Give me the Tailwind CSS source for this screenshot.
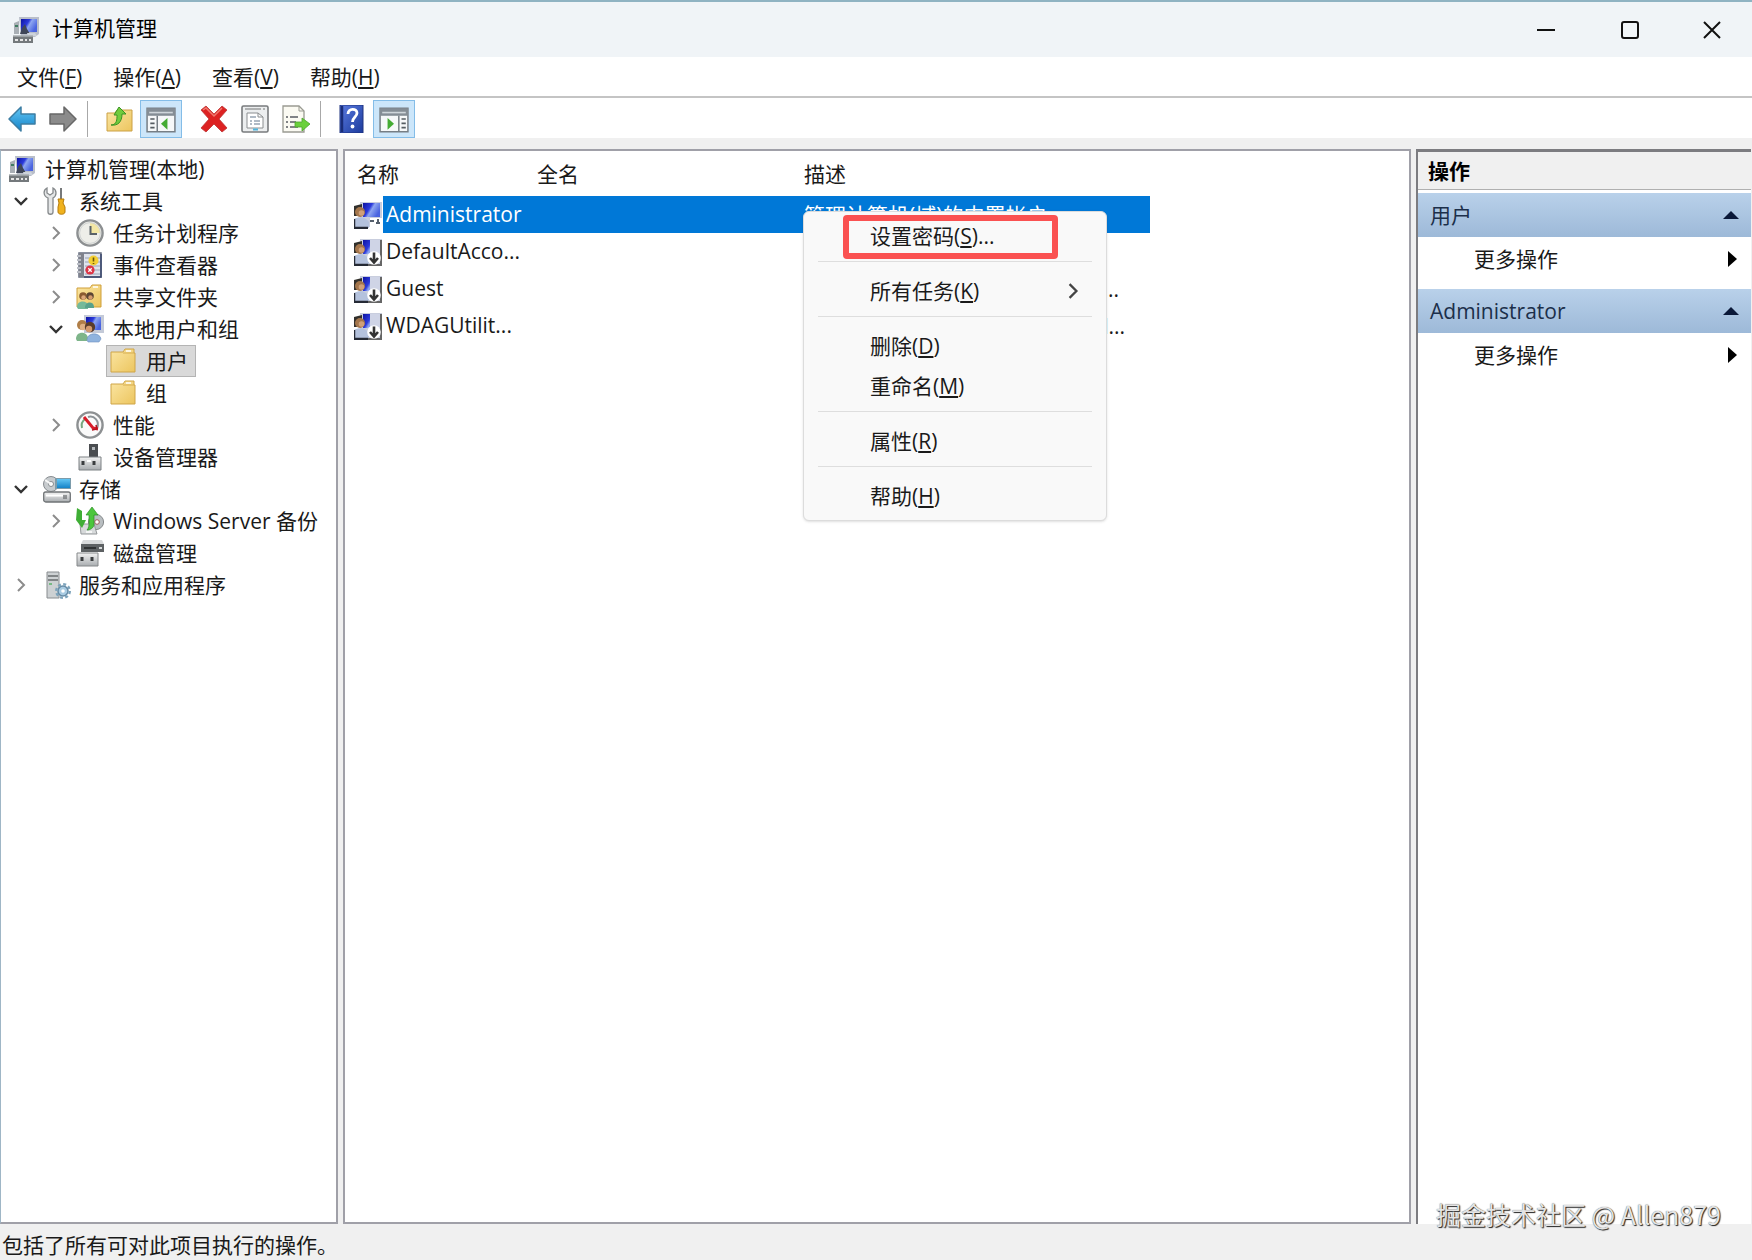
<!DOCTYPE html>
<html lang="zh-CN">
<head>
  <meta charset="UTF-8">
  <meta name="viewport" content="width=device-width, initial-scale=1.0">
  <title>计算机管理</title>
  <script src="https://cdn.jsdelivr.net/npm/@tailwindcss/browser@4"></script>
</head>
<body class="h-screen flex flex-col overflow-hidden bg-[#f0f0f0] text-[21px] leading-8 text-[#1a1a1a] font-['Open_Sans','Noto_Sans_CJK_SC',sans-serif]">

  <!-- Icon sprite -->
  <svg class="absolute size-0" aria-hidden="true">
    <defs>
      <linearGradient id="g-screen" x1="0" y1="0" x2="1" y2="0.5">
        <stop offset="0" stop-color="#0d12a0"/><stop offset="0.45" stop-color="#2c3bdc"/><stop offset="0.6" stop-color="#8ea6f0"/><stop offset="1" stop-color="#4a64e0"/>
      </linearGradient>
      <linearGradient id="g-folder" x1="0" y1="0" x2="1" y2="1">
        <stop offset="0" stop-color="#fbe6a4"/><stop offset="1" stop-color="#ecc55e"/>
      </linearGradient>
      <linearGradient id="g-blue" x1="0" y1="0" x2="0" y2="1">
        <stop offset="0" stop-color="#62c6f4"/><stop offset="1" stop-color="#1583c8"/>
      </linearGradient>
      <linearGradient id="g-metal" x1="0" y1="0" x2="0" y2="1">
        <stop offset="0" stop-color="#f2f2f2"/><stop offset="1" stop-color="#a9adb0"/>
      </linearGradient>
      <linearGradient id="g-help" x1="0" y1="0" x2="1" y2="1">
        <stop offset="0" stop-color="#5b7be0"/><stop offset="1" stop-color="#1b3a9c"/>
      </linearGradient>
    </defs>
    <symbol id="computer" viewBox="0 0 28 28">
      <path d="M7 1h20v17l-4 3H9z" fill="#b9bec9"/>
      <path d="M9 3h16v13H9z" fill="url(#g-screen)"/>
      <path d="M2 7l5-2v13H2z" fill="#a9afb5"/>
      <path d="M3 10h3" stroke="#3f7b60" stroke-width="2"/>
      <path d="M10 12l3-4 2 5 3 5H8z" fill="#3f4658"/>
      <path d="M15 17h8l2 3h-9z" fill="#cdd3db"/>
      <path d="M1 20h20v7H1z" fill="#74797c"/>
      <path d="M1 20h20" stroke="#a9aeb0" stroke-width="1.5"/>
      <path d="M3 24h3m2 0h3m2 0h2m2 0h2" stroke="#e6e6e6" stroke-width="2"/>
    </symbol>
    <symbol id="tools" viewBox="0 0 28 28">
      <path d="M4 1v5l3 2 3-2V1c4 2 4 8 0 10v14c0 3-5 3-5 0V11C0 9 0 3 4 1z" fill="#e4e6e7" stroke="#85898b" stroke-width="1.3"/>
      <path d="M18 1v11" stroke="#77797a" stroke-width="2"/>
      <path d="M15 12h6l-1 4 2 4v5c0 3-7 3-7 0v-5l1-4z" fill="#f0b21e" stroke="#b57b09"/>
    </symbol>
    <symbol id="clock" viewBox="0 0 28 28">
      <circle cx="14" cy="14" r="12.6" fill="#eeeee9" stroke="#8d9092" stroke-width="2.4"/>
      <path d="M14 14V3.500a10.500 10.500 0 0 1 10.500 10.500z" fill="#f3e7a5"/>
      <circle cx="14" cy="14" r="10.400" fill="none" stroke="#cfd2d2"/>
      <path d="M14.500 7v8H21" fill="none" stroke="#5a6268" stroke-width="2"/>
    </symbol>
    <symbol id="event" viewBox="0 0 28 28">
      <path d="M3 2h22v24H3z" fill="#dfe3ec" stroke="#666d80" stroke-width="1.500"/>
      <path d="M3 2h5v24H3z" fill="#7f828c"/>
      <path d="M1 5h4M1 9h4M1 13h4M1 17h4M1 21h4" stroke="#b9bcc4" stroke-width="2"/>
      <path d="M9 7h15M9 11h15M9 15h15M9 19h15M9 23h15" stroke="#9aa2b6"/>
      <circle cx="17.500" cy="9.500" r="5" fill="#f3cf34"/>
      <path d="M17.500 6.500v4m0 1.500v1" stroke="#6b5608" stroke-width="1.600"/>
      <circle cx="14" cy="19" r="4.600" fill="#dc3546"/>
      <path d="M12.300 17.300l3.400 3.400m0-3.400l-3.400 3.400" stroke="#fff" stroke-width="1.300"/>
      <path d="M25 3v23H8" fill="none" stroke="#3d4a70" stroke-width="1.500"/>
    </symbol>
    <symbol id="shared" viewBox="0 0 28 28">
      <path d="M1 5h13l2-3h9v22H1z" fill="url(#g-folder)" stroke="#cf9f3a"/>
      <path d="M17 4h5" stroke="#fff" stroke-width="1.500"/>
      <circle cx="7" cy="13" r="3.800" fill="#8a5a30"/>
      <circle cx="14" cy="13" r="3.800" fill="#5b4433"/>
      <circle cx="7.500" cy="14.500" r="2.200" fill="#dca77a"/>
      <circle cx="14.500" cy="14.500" r="2.200" fill="#d59c6c"/>
      <path d="M1 24c0-7 10-7 11-2v4H2z" fill="#74b99a"/>
      <path d="M9 25c0-7 9-7 9-1v1z" fill="#58a18c"/>
    </symbol>
    <symbol id="localusers" viewBox="0 0 28 28">
      <path d="M8 0h20v18H8z" fill="#c4cad8"/>
      <path d="M10 2h15v13H10z" fill="url(#g-screen)"/>
      <circle cx="6" cy="10" r="5" fill="#b07e48"/>
      <circle cx="7" cy="12" r="3.200" fill="#dfb083"/>
      <circle cx="14" cy="12" r="5.200" fill="#5a3c2b"/>
      <circle cx="13" cy="14" r="3.200" fill="#d39a6f"/>
      <path d="M0 24c0-8 11-8 12-1l-1 3H1z" fill="#7eb58a"/>
      <path d="M11 25c0-8 13-8 14-1l-2 3H12z" fill="#8fb3de" stroke="#6f90c0" stroke-width=".6"/>
    </symbol>
    <symbol id="folder" viewBox="0 0 28 28">
      <path d="M2 5h12l2-3h9v4h1v19H2z" fill="url(#g-folder)" stroke="#cfa548"/>
      <path d="M14 6h11" stroke="#d7ae52"/>
      <path d="M17 4h5" stroke="#fff" stroke-width="1.500"/>
    </symbol>
    <symbol id="perf" viewBox="0 0 28 28">
      <circle cx="14" cy="14" r="12.600" fill="#fafafa" stroke="#8d9092" stroke-width="2.400"/>
      <path d="M6 17a8.500 8.500 0 0 1 3-9" fill="none" stroke="#76a77e" stroke-width="2"/>
      <path d="M12 6c6-2 12 4 9 11" fill="none" stroke="#8c9296" stroke-width="2"/>
      <path d="M8 6l9 11 5 1" fill="none" stroke="#d81d2a" stroke-width="3"/>
      <path d="M20 14l1 4-5 1" fill="none" stroke="#b5121d" stroke-width="1.500"/>
    </symbol>
    <symbol id="device" viewBox="0 0 28 28">
      <path d="M13 1h9v13h-9z" fill="#4a4d50"/>
      <path d="M16 4h3v3h-3z" fill="#b3b8bb"/>
      <path d="M3 14h22v13H3z" fill="url(#g-metal)" stroke="#7d8184"/>
      <path d="M7 18v4m11-4v4" stroke="#3a3d3f" stroke-width="3"/>
      <path d="M11 18h4" stroke="#fff" stroke-width="2"/>
    </symbol>
    <symbol id="storage" viewBox="0 0 28 28">
      <circle cx="8" cy="9" r="7.500" fill="#c7cbce" stroke="#878c90"/>
      <circle cx="8" cy="9" r="2.500" fill="#fff" stroke="#878c90"/>
      <path d="M2 5l6 4" stroke="#f7f7f7" stroke-width="2"/>
      <path d="M12 3h16v11H12z" fill="#7c9cab"/>
      <path d="M14 4h13v9H14z" fill="url(#g-blue)"/>
      <rect x=".7" y="17" width="26.600" height="10" rx="2" fill="url(#g-metal)" stroke="#707477" stroke-width="1.300"/>
      <path d="M3 20.500h17" stroke="#fff" stroke-width="2"/>
      <path d="M21 20v4m2-4v4" stroke="#4e5254"/>
    </symbol>
    <symbol id="backup" viewBox="0 0 28 28">
      <circle cx="20" cy="15" r="7.600" fill="#b9bec1" stroke="#85898b"/>
      <circle cx="21" cy="15" r="2.300" fill="#fff" stroke="#a15c5c"/>
      <path d="M4 17h14l3 10H5z" fill="#d7dadb" stroke="#94989a"/>
      <path d="M1 1l5 3v9h4l-4 8-6-8z" fill="#3fae35"/>
      <path d="M16 0l6 8h-4v9c0 4-4 6-7 6 2-2 2-5 2-8V8h-3z" fill="#4cc63c" stroke="#2c8c26" stroke-width=".7"/>
      <path d="M10 25h6" stroke="#fff" stroke-width="1.500"/>
    </symbol>
    <symbol id="disk" viewBox="0 0 28 28">
      <path d="M7 1h19l2 4H5z" fill="#d8dadb"/>
      <path d="M5 5h23v8H5z" fill="#5d6163"/>
      <path d="M8 9h12" stroke="#2e3132" stroke-width="2"/>
      <path d="M23 9h3" stroke="#d6d9da" stroke-width="2"/>
      <path d="M1 14h21v13H1z" fill="url(#g-metal)" stroke="#85888a"/>
      <path d="M6 18v4m10-4v4" stroke="#3a3d3f" stroke-width="3"/>
    </symbol>
    <symbol id="services" viewBox="0 0 28 28">
      <path d="M4 1h12v26H4z" fill="#cdd1d3" stroke="#888c8f"/>
      <path d="M5 5h10M5 9h10" stroke="#686c6f" stroke-width="1.500"/>
      <path d="M6 13h3" stroke="#59b26a" stroke-width="1.500"/>
      <circle cx="20" cy="20" r="5" fill="#a8cbe2" stroke="#668ba5" stroke-width="1.500"/>
      <circle cx="20" cy="20" r="6.800" fill="none" stroke="#7da3bb" stroke-width="2.400" stroke-dasharray="3 2.340"/>
      <circle cx="20" cy="20" r="1.800" fill="#fff"/>
    </symbol>
    <symbol id="user" viewBox="0 0 28 28">
      <path d="M6 1h22v25H6z" fill="#c9cede"/>
      <path d="M9 2h17v14H9z" fill="url(#g-screen)"/>
      <path d="M0 5l8-2v12H0z" fill="#32302c"/>
      <circle cx="6" cy="11" r="5" fill="#a4764c"/>
      <circle cx="7.500" cy="12" r="2.800" fill="#d0a078"/>
      <path d="M0 27V18c5-3 12-2 15 3v6z" fill="#b4c2dd"/>
      <path d="M0 18v9h14" fill="none" stroke="#252a35" stroke-width="2.500"/>
    </symbol>
    <symbol id="user-admin" viewBox="0 0 28 28">
      <use href="#user"/>
      <path d="M16 17h12v11H16z" fill="#fff"/>
      <path d="M16 20h4m2 2h4m-2-4v4" stroke="#555f6c" stroke-width="2"/>
    </symbol>
    <symbol id="user-off" viewBox="0 0 28 28">
      <use href="#user"/>
      <path d="M16 2h11v14H16z" fill="#cfd4e6"/>
      <path d="M27 2v25H14" fill="none" stroke="#666" stroke-width="2"/>
      <circle cx="20" cy="20" r="6.800" fill="#fff"/>
      <path d="M20 14.500v9m-4-3.500l4 4.500 4-4.500" fill="none" stroke="#333" stroke-width="2.600"/>
    </symbol>
    <symbol id="arrow" viewBox="0 0 28 28">
      <path d="M1 14L13 2v7h14v10H13v7z" stroke-width="1.500" stroke-linejoin="round"/>
    </symbol>
    <symbol id="up-folder" viewBox="0 0 28 28">
      <path d="M1 8h8l2-3h15v21H1z" fill="url(#g-folder)" stroke="#cba045"/>
      <path d="M5 20c6 0 6-6 6-10H8l5-8 7 7h-4c0 8-4 12-11 11z" fill="#71cb3c" stroke="#3b9424"/>
    </symbol>
    <symbol id="pane-left" viewBox="0 0 28 28">
      <path d="M1 4h26v22H1z" fill="#f6f8f9" stroke="#767e85" stroke-width="1.400"/>
      <path d="M1 4h26v7H1z" fill="#848d95"/>
      <path d="M3 8h22" stroke="#cfd6db" stroke-width="1.500"/>
      <path d="M10.500 11v15" stroke="#767e85" stroke-width="1.400"/>
      <path d="M4 14h4M4 18h4M4 22h4" stroke="#555c62" stroke-width="1.600"/>
      <path d="M20 13v11l-6-5.500z" fill="#44ab33"/>
    </symbol>
    <symbol id="pane-right" viewBox="0 0 28 28">
      <path d="M1 4h26v22H1z" fill="#f6f8f9" stroke="#767e85" stroke-width="1.400"/>
      <path d="M1 4h26v7H1z" fill="#848d95"/>
      <path d="M3 8h22" stroke="#cfd6db" stroke-width="1.500"/>
      <path d="M18.500 11v15" stroke="#767e85" stroke-width="1.400"/>
      <path d="M21 14h4M21 18h4M21 22h4" stroke="#555c62" stroke-width="1.600"/>
      <path d="M8 13v11l6-5.500z" fill="#44ab33"/>
    </symbol>
    <symbol id="delete" viewBox="0 0 28 28">
      <path d="M1 5l5-4 8 8 8-8 5 4-8 9 8 9-5 4-8-8-8 8-5-4 8-9z" fill="#dd2222" stroke="#b33" stroke-width=".8"/>
      <path d="M3 5l3-2 8 8 8-8" fill="none" stroke="#f07a70" stroke-width="1.500"/>
    </symbol>
    <symbol id="props" viewBox="0 0 28 28">
      <rect x="1" y="1" width="26" height="26" rx="1.500" fill="#eceeef" stroke="#787b7d" stroke-width="1.600"/>
      <path d="M4 4h16m2 0h2" stroke="#9a9d9f" stroke-width="1.500"/>
      <path d="M6 8h11l5 4v11H6z" fill="#fff" stroke="#8b8e90"/>
      <path d="M17 8v4h5" fill="none" stroke="#8b8e90"/>
      <path d="M9 12h6M9 16h2m2 0h6M9 19h2m2 0h6" stroke="#96a4b3" stroke-width="1.400"/>
      <path d="M12 24.500h5" stroke="#4fb5dd" stroke-width="2"/>
    </symbol>
    <symbol id="export" viewBox="0 0 28 28">
      <path d="M1 1h16l5 5v21H1z" fill="#fbfaf2" stroke="#9a9b92" stroke-width="1.300"/>
      <path d="M17 1v5h5" fill="none" stroke="#9a9b92"/>
      <path d="M4 12h2m2 0h8M4 17h2m2 0h6M4 22h2m2 0h8" stroke="#595c63" stroke-width="1.600"/>
      <path d="M13 17h7v-4l8 6-8 7v-4h-7z" fill="#6bd03c" stroke="#4ba52b" stroke-width=".8"/>
    </symbol>
    <symbol id="help" viewBox="0 0 28 28">
      <path d="M3 0h23v28H3z" fill="url(#g-help)" stroke="#1e327f"/>
      <path d="M5 1v26" stroke="#1a2d78" stroke-width="2.500"/>
      <path d="M11 9c0-6 9-6 9-1 0 4-4.500 4-4.500 9" fill="none" stroke="#fff" stroke-width="2.800"/>
      <circle cx="15.500" cy="21.500" r="1.900" fill="#fff"/>
    </symbol>
    <symbol id="chev-right" viewBox="0 0 14 14">
      <path d="M4 1l6 6-6 6" fill="none" stroke="currentColor" stroke-width="2"/>
    </symbol>
    <symbol id="chev-down" viewBox="0 0 14 14">
      <path d="M1 4l6 6 6-6" fill="none" stroke="currentColor" stroke-width="2.400"/>
    </symbol>
  </svg>

  <!-- Title bar -->
  <header class="h-[57px] shrink-0 flex items-center bg-[#f0f4f7] border-t-2 border-[#8fb3c2] pl-3">
    <svg class="size-7"><use href="#computer"/></svg>
    <h1 class="ml-3 pb-1 grow text-black">计算机管理</h1>
    <button type="button" aria-label="最小化" class="w-[84px] h-full flex items-center justify-center">
      <svg class="size-[18px]" viewBox="0 0 18 18" fill="none" stroke="#111" stroke-width="2"><path d="M0 9h18"/></svg>
    </button>
    <button type="button" aria-label="最大化" class="w-[84px] h-full flex items-center justify-center">
      <svg class="size-[18px]" viewBox="0 0 18 18" fill="none" stroke="#111" stroke-width="2"><rect x="1" y="1" width="16" height="16" rx="2"/></svg>
    </button>
    <button type="button" aria-label="关闭" class="w-20 h-full flex items-center justify-center">
      <svg class="size-[18px]" viewBox="0 0 18 18" fill="none" stroke="#111" stroke-width="2"><path d="M1 1l16 16M17 1L1 17"/></svg>
    </button>
  </header>

  <!-- Menu bar -->
  <nav class="h-[41px] shrink-0 flex items-center gap-[31px] bg-white border-b-2 border-[#c4c4c4] pl-[17px]">
    <button type="button">文件(<u class="underline-offset-2">F</u>)</button>
    <button type="button">操作(<u class="underline-offset-2">A</u>)</button>
    <button type="button">查看(<u class="underline-offset-2">V</u>)</button>
    <button type="button">帮助(<u class="underline-offset-2">H</u>)</button>
  </nav>

  <!-- Toolbar -->
  <div class="h-10 shrink-0 flex items-center bg-white pl-2 pt-0.5" role="toolbar" aria-label="工具栏">
    <button type="button" aria-label="后退"><svg class="size-7" fill="url(#g-blue)" stroke="#3c7da3"><use href="#arrow"/></svg></button>
    <button type="button" aria-label="前进" class="ml-[13px]"><svg class="size-7 -scale-x-100" fill="#8b8b8b" stroke="#686868"><use href="#arrow"/></svg></button>
    <span class="w-px h-9 ml-[10px] bg-[#a8a8a8]"></span>
    <button type="button" aria-label="向上一级" class="ml-[18px]"><svg class="size-7"><use href="#up-folder"/></svg></button>
    <button type="button" aria-label="显示/隐藏控制台树" aria-pressed="true" class="ml-[6px] w-[42px] h-[38px] flex items-center justify-center bg-[#cce6fa] border border-[#84bde8]"><svg class="size-[30px]"><use href="#pane-left"/></svg></button>
    <button type="button" aria-label="删除" class="ml-[18px]"><svg class="size-7"><use href="#delete"/></svg></button>
    <button type="button" aria-label="属性" class="ml-[13px]"><svg class="size-7"><use href="#props"/></svg></button>
    <button type="button" aria-label="导出列表" class="ml-[13px]"><svg class="size-7"><use href="#export"/></svg></button>
    <span class="w-px h-9 ml-[10px] bg-[#a8a8a8]"></span>
    <button type="button" aria-label="帮助" class="ml-[16px]"><svg class="size-7"><use href="#help"/></svg></button>
    <button type="button" aria-label="显示/隐藏操作窗格" aria-pressed="true" class="ml-[8px] w-[42px] h-[38px] flex items-center justify-center bg-[#cce6fa] border border-[#84bde8]"><svg class="size-[30px]"><use href="#pane-right"/></svg></button>
  </div>

  <main class="grow min-h-0 flex gap-[5px] pt-[11px]">

    <!-- Console tree -->
    <aside class="w-[338px] shrink-0 bg-white border-2 border-l border-[#a0a0a8] border-l-[#9fb6c6] pt-[2px]">
      <ul>
        <li class="h-8 flex items-center pl-[7px]"><svg class="size-7 mr-[9px]"><use href="#computer"/></svg>计算机管理(本地)</li>
        <li class="h-8 flex items-center pl-[13px]"><svg class="size-3.5 mr-[15px] text-[#333]"><use href="#chev-down"/></svg><svg class="size-7 mr-2"><use href="#tools"/></svg>系统工具</li>
        <li class="h-8 flex items-center pl-[48px]"><svg class="size-3.5 mr-[13px] text-[#8c8c8c]"><use href="#chev-right"/></svg><svg class="size-7 mr-[9px]"><use href="#clock"/></svg>任务计划程序</li>
        <li class="h-8 flex items-center pl-[48px]"><svg class="size-3.5 mr-[13px] text-[#8c8c8c]"><use href="#chev-right"/></svg><svg class="size-7 mr-[9px]"><use href="#event"/></svg>事件查看器</li>
        <li class="h-8 flex items-center pl-[48px]"><svg class="size-3.5 mr-[13px] text-[#8c8c8c]"><use href="#chev-right"/></svg><svg class="size-7 mr-[9px]"><use href="#shared"/></svg>共享文件夹</li>
        <li class="h-8 flex items-center pl-[48px]"><svg class="size-3.5 mr-[13px] text-[#333]"><use href="#chev-down"/></svg><svg class="size-7 mr-[9px]"><use href="#localusers"/></svg>本地用户和组</li>
        <li class="h-8 flex items-center pl-[105px]"><span class="h-8 flex items-center bg-[#d9d9d9] border border-[#b4b4b4] pl-[2px] pr-[7px]"><svg class="size-7 mr-[9px]"><use href="#folder"/></svg>用户</span></li>
        <li class="h-8 flex items-center pl-[108px]"><svg class="size-7 mr-[9px]"><use href="#folder"/></svg>组</li>
        <li class="h-8 flex items-center pl-[48px]"><svg class="size-3.5 mr-[13px] text-[#8c8c8c]"><use href="#chev-right"/></svg><svg class="size-7 mr-[9px]"><use href="#perf"/></svg>性能</li>
        <li class="h-8 flex items-center pl-[75px]"><svg class="size-7 mr-[9px]"><use href="#device"/></svg>设备管理器</li>
        <li class="h-8 flex items-center pl-[13px]"><svg class="size-3.5 mr-[15px] text-[#333]"><use href="#chev-down"/></svg><svg class="size-7 mr-2"><use href="#storage"/></svg>存储</li>
        <li class="h-8 flex items-center pl-[48px]"><svg class="size-3.5 mr-[13px] text-[#8c8c8c]"><use href="#chev-right"/></svg><svg class="size-7 mr-[9px]"><use href="#backup"/></svg>Windows Server 备份</li>
        <li class="h-8 flex items-center pl-[75px]"><svg class="size-7 mr-[9px]"><use href="#disk"/></svg>磁盘管理</li>
        <li class="h-8 flex items-center pl-[13px]"><svg class="size-3.5 mr-[15px] text-[#8c8c8c]"><use href="#chev-right"/></svg><svg class="size-7 mr-2"><use href="#services"/></svg>服务和应用程序</li>
      </ul>
    </aside>

    <!-- User list -->
    <section class="relative grow min-w-0 bg-white border-2 border-[#a0a0a8]">
      <table class="table-fixed w-[805px] text-left">
        <colgroup><col class="w-[180px]"><col class="w-[267px]"><col></colgroup>
        <thead>
          <tr class="h-[45px]">
            <th class="p-0 pl-3 font-normal">名称</th>
            <th class="p-0 pl-3 font-normal">全名</th>
            <th class="p-0 pl-3 font-normal">描述</th>
          </tr>
        </thead>
        <tbody>
          <tr class="h-[37px] text-white">
            <td class="p-0 pl-[9px]"><div class="flex items-center"><svg class="size-7 shrink-0"><use href="#user-admin"/></svg><span class="grow bg-[#0078d7] ml-px pl-[3px] leading-[37px] truncate">Administrator</span></div></td>
            <td class="p-0 bg-[#0078d7]"></td>
            <td class="p-0 pl-3 bg-[#0078d7] truncate">管理计算机(域)的内置帐户</td>
          </tr>
          <tr class="h-[37px]">
            <td class="p-0 pl-[9px]"><div class="flex items-center"><svg class="size-7 shrink-0"><use href="#user-off"/></svg><span class="pl-1 leading-[37px]">DefaultAcco...</span></div></td>
            <td></td>
            <td></td>
          </tr>
          <tr class="h-[37px]">
            <td class="p-0 pl-[9px]"><div class="flex items-center"><svg class="size-7 shrink-0"><use href="#user-off"/></svg><span class="pl-1 leading-[37px]">Guest</span></div></td>
            <td></td>
            <td class="p-0 pr-[31px] text-right">...</td>
          </tr>
          <tr class="h-[37px]">
            <td class="p-0 pl-[9px]"><div class="flex items-center"><svg class="size-7 shrink-0"><use href="#user-off"/></svg><span class="pl-1 leading-[37px]">WDAGUtilit...</span></div></td>
            <td></td>
            <td class="p-0 pr-[25px] text-right">l...</td>
          </tr>
        </tbody>
      </table>

      <!-- Context menu -->
      <div role="menu" class="absolute left-[458px] top-[60px] w-[304px] flex flex-col pt-[5px] pb-[3px] bg-[#f9f9f9] border border-[#dcdcdc] rounded-md shadow-sm">
        <button type="button" role="menuitem" class="h-10 pb-0.5 pl-[66px] text-left">设置密码(<u class="underline-offset-2">S</u>)...</button>
        <hr class="mt-1 mb-2.5 mx-3.5 border-[#dedede]">
        <button type="button" role="menuitem" class="h-10 pb-0.5 pl-[66px] pr-[25px] flex items-center justify-between"><span>所有任务(<u class="underline-offset-2">K</u>)</span><svg class="size-4 text-[#444]"><use href="#chev-right"/></svg></button>
        <hr class="mt-1 mb-2.5 mx-3.5 border-[#dedede]">
        <button type="button" role="menuitem" class="h-10 pb-0.5 pl-[66px] text-left">删除(<u class="underline-offset-2">D</u>)</button>
        <button type="button" role="menuitem" class="h-10 pb-0.5 pl-[66px] text-left">重命名(<u class="underline-offset-2">M</u>)</button>
        <hr class="mt-1 mb-2.5 mx-3.5 border-[#dedede]">
        <button type="button" role="menuitem" class="h-10 pb-0.5 pl-[66px] text-left">属性(<u class="underline-offset-2">R</u>)</button>
        <hr class="mt-1 mb-2.5 mx-3.5 border-[#dedede]">
        <button type="button" role="menuitem" class="h-10 pb-0.5 pl-[66px] text-left">帮助(<u class="underline-offset-2">H</u>)</button>
        <!-- Highlight frame -->
        <span class="absolute left-[39px] top-[3px] w-[215px] h-11 border-6 border-[#fa5151] rounded-sm pointer-events-none"></span>
      </div>
    </section>

    <!-- Actions pane -->
    <aside class="w-[335px] shrink-0 mr-px bg-white border-l-2 border-t-3 border-[#7c7c80]">
      <h2 class="h-[38px] flex items-center bg-[#f0f0f0] border-b border-[#b0b0b0] pl-[10px] font-bold text-black">操作</h2>
      <h3 class="mt-[3px]"><button type="button" class="w-full h-11 flex items-center justify-between pl-3 pr-3 bg-linear-to-b from-[#b9d1ea] to-[#9db9d8] text-[#1c2f4a]">用户<svg class="w-4 h-2" viewBox="0 0 16 8"><path d="M0 8l8-8 8 8z" fill="#0a1838"/></svg></button></h3>
      <button type="button" class="w-full h-11 flex items-center justify-between pl-14 pr-[14px]">更多操作<svg class="w-[9px] h-4" viewBox="0 0 9 16"><path d="M0 0l9 8-9 8z" fill="#000"/></svg></button>
      <h3 class="mt-2"><button type="button" class="w-full h-11 flex items-center justify-between pl-3 pr-3 bg-linear-to-b from-[#b9d1ea] to-[#9db9d8] text-[#1c2f4a]">Administrator<svg class="w-4 h-2" viewBox="0 0 16 8"><path d="M0 8l8-8 8 8z" fill="#0a1838"/></svg></button></h3>
      <button type="button" class="w-full h-11 flex items-center justify-between pl-14 pr-[14px]">更多操作<svg class="w-[9px] h-4" viewBox="0 0 9 16"><path d="M0 0l9 8-9 8z" fill="#000"/></svg></button>
    </aside>
  </main>

  <!-- Status bar -->
  <footer class="relative h-9 shrink-0 pl-[2px] pt-[5px] whitespace-nowrap">
    包括了所有可对此项目执行的操作。
    <span class="absolute right-[31px] bottom-[30px] text-[25px] text-[#e4e4e4] [text-shadow:1px_1px_1px_#222,0_0_1px_#555] font-['Noto_Sans_CJK_SC',sans-serif]">掘金技术社区 @ Allen879</span>
  </footer>
</body>
</html>
